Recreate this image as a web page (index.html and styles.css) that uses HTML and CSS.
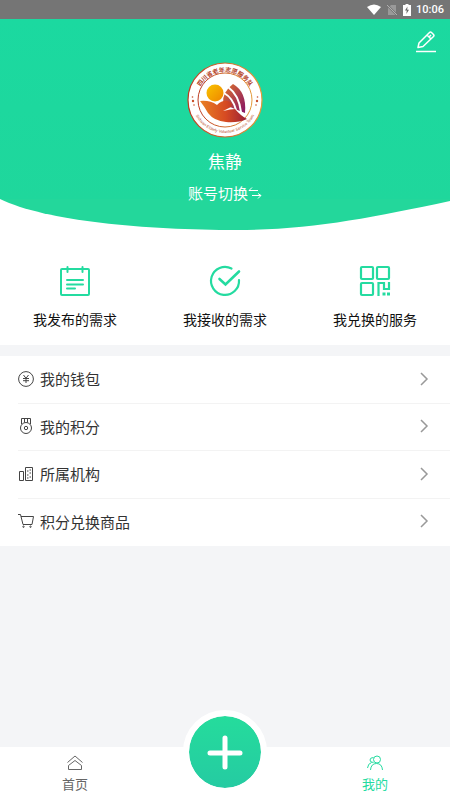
FILE: index.html
```
<!DOCTYPE html>
<html lang="zh-CN">
<head>
<meta charset="utf-8">
<meta name="viewport" content="width=device-width, initial-scale=1.0">
<title>我的</title>
<link rel="stylesheet" href="styles.css">
</head>
<body>
<div class="status">
  <svg width="14" height="12" viewBox="0 0 14 12"><path d="M0 3Q7-2 14 3L7 11Z" fill="#fff"/></svg>
  <svg width="12" height="12" viewBox="0 0 12 12"><path d="M5 1h5v10H2V4Z" fill="#999"/><path d="M1 1l10 10" stroke="#757575" stroke-width="2"/><path d="M1 1l10 10" stroke="#b0b0b0"/></svg>
  <svg width="8" height="12" viewBox="0 0 8 12"><path d="M2.500 0h3v1H8v11H0V1h2.500Z" fill="#fff"/><path d="M4.500 2.500L2 6.500h1.800L3.300 10 6 5.700H4.200Z" fill="#666"/></svg>
  <span class="clock">10:06</span>
</div>

<header>
  <div class="profile">
    <button class="edit" aria-label="编辑">
      <svg width="20" height="22" viewBox="0 0 20 22" fill="none" stroke="#fff" stroke-width="1.500"><path d="M0 20.500h20"/><path d="M2 16.500l1-4.500L13.500 1.500q1-1 2 0l2 2q1 1 0 2L7 15.500ZM11 4l4 4M13.500 5.500l1.500-1.500" stroke-linejoin="round"/></svg>
    </button>
    <svg class="avatar" width="76" height="76" viewBox="0 0 76 76">
      <defs>
        <linearGradient id="sun" x1="0" y1="0" x2="1" y2="1"><stop offset="0" stop-color="#f9c400"/><stop offset="1" stop-color="#ef8500"/></linearGradient>
        <linearGradient id="hand"><stop offset="0" stop-color="#e98123"/><stop offset=".55" stop-color="#d64a22"/><stop offset="1" stop-color="#982038"/></linearGradient>
        <linearGradient id="sail" x1="0" y1="0" x2="1" y2="1"><stop offset="0" stop-color="#e0762a"/><stop offset=".9" stop-color="#8d1b62"/></linearGradient>
        <linearGradient id="ring"><stop offset="0" stop-color="#bd3a20"/><stop offset="1" stop-color="#e39a3a"/></linearGradient>
        <path id="top" d="M10 38a28 28 0 0 1 56 0"/>
        <path id="bottom" d="M5 38a33 33 0 0 0 66 0"/>
      </defs>
      <circle cx="38" cy="38" r="37" fill="#fff" stroke="url(#ring)" stroke-width="1.200"/>
      <circle cx="38" cy="38" r="27" fill="none" stroke="url(#ring)"/>
      <text class="seal-cn"><textPath href="#top" startOffset="50%" text-anchor="middle">四川省老年志愿服务队</textPath></text>
      <text class="seal-en"><textPath href="#bottom" startOffset="50%" text-anchor="middle">Sichuan Elderly Volunteer Service Team</textPath></text>
      <g fill="#c8502b"><circle cx="5.500" cy="35" r=".8"/><circle cx="6" cy="39" r="1.200"/><circle cx="7" cy="43" r=".8"/><circle cx="70.500" cy="35" r=".8"/><circle cx="70" cy="39" r="1.200"/><circle cx="69" cy="43" r=".8"/></g>
      <path d="M46 22Q60 30 58 51Q50 48 36 42Q35 30 46 22Z" fill="url(#sail)"/>
      <path d="M37 31q9 5 12 17M41 25q11 8 13 25" fill="none" stroke="#fff" stroke-width="2"/>
      <circle cx="28" cy="31" r="8.500" fill="url(#sun)"/>
      <path d="M13 39q10-1 17 4 5-5 11-4 6 2 3 6-4 2-8 4 8-2 12-2 6 7 12 10-9 4-21 3-12-1-18-9-4-7-8-12Z" fill="url(#hand)"/>
    </svg>
    <h1>焦静</h1>
    <button class="switch">账号切换<svg width="14" height="12" viewBox="0 0 14 12" fill="none" stroke="#fff"><path d="M4 .5L1 3.500h9M4 8.500h9M10 11.500l3-3-3-2"/></svg></button>
  </div>
  <svg class="curve" viewBox="0 0 450 32" preserveAspectRatio="none"><path d="M0 0C45 22 145 31 237 31 310 31 370 19 450 2V0Z"/></svg>
</header>

<main>
  <nav class="shortcuts">
    <a href="#published">
      <svg class="icon" viewBox="0 0 30 30" stroke-width="2"><rect x="1" y="3" width="28" height="26" rx="1"/><path d="M7.500 1v5M22.500 1v5M7 14h16M7 18.500h16M7 22.500h8" stroke-linecap="round"/></svg>
      <span>我发布的需求</span>
    </a>
    <a href="#received">
      <svg class="icon" viewBox="0 0 30 30" stroke-width="2.200" stroke-linecap="round"><path d="M21.500 2.500A14 14 0 1 0 29 14"/><path d="M9.500 13l6 5.500L29 5.500" stroke-width="2.600"/></svg>
      <span>我接收的需求</span>
    </a>
    <a href="#exchanged">
      <svg class="icon" viewBox="0 0 30 30" stroke-width="2.200"><rect x="1" y="1" width="12" height="12" rx="1"/><rect x="17" y="1" width="12" height="12" rx="1"/><rect x="1" y="17" width="12" height="12" rx="1"/><path d="M18.500 30V17H24v6h5v-7"/><path d="M22.500 28h3M27 28h3" stroke-width="3"/></svg>
      <span>我兑换的服务</span>
    </a>
  </nav>

  <nav class="menu">
    <a href="#wallet">
      <svg class="glyph" viewBox="0 0 16 16"><circle cx="8" cy="8" r="7.400"/><path d="M5.500 4L8 7.300 10.500 4M8 7.300V12M5 7.500h6M5 9.700h6"/></svg>
      <span>我的钱包</span>
      <svg class="arrow" viewBox="0 0 8 14"><path d="M1 1l6 6-6 6"/></svg>
    </a>
    <a href="#points">
      <svg class="glyph" viewBox="0 0 16 16"><circle cx="8" cy="10" r="5.500"/><circle cx="8" cy="10" r="1.700"/><path d="M3.500 6V.5h9V6M6.500 1v3.500M9.500 1v3.500"/></svg>
      <span>我的积分</span>
      <svg class="arrow" viewBox="0 0 8 14"><path d="M1 1l6 6-6 6"/></svg>
    </a>
    <a href="#organization">
      <svg class="glyph" viewBox="0 0 16 16"><path d="M1.500 5.500h4v9h-4ZM7.500 1.500h7v13h-7Z"/><path d="M9 5h1.500M11.500 7H13M9 9h1.500M11.500 11H13M11.500 4H13M9 12h1.500"/></svg>
      <span>所属机构</span>
      <svg class="arrow" viewBox="0 0 8 14"><path d="M1 1l6 6-6 6"/></svg>
    </a>
    <a href="#goods">
      <svg class="glyph" viewBox="0 0 16 16"><path d="M0 1.500h2.500L5 11.500h9L15.500 3.500H3"/><circle cx="5.500" cy="13.700" r=".7"/><circle cx="12.500" cy="13.700" r=".7"/></svg>
      <span>积分兑换商品</span>
      <svg class="arrow" viewBox="0 0 8 14"><path d="M1 1l6 6-6 6"/></svg>
    </a>
  </nav>
</main>

<footer>
  <a class="tab" href="#home">
    <svg width="16" height="16" viewBox="0 0 16 16"><path d="M.5 7.500L8 1l7.500 6.500M1.500 14.500V10.500L8 5.500l6.500 5v4Z"/></svg>
    <span>首页</span>
  </a>
  <button class="add" aria-label="发布">
    <svg width="36" height="36" viewBox="0 0 36 36"><path d="M18 4v29M3 19h30" stroke="#fff" stroke-width="5" stroke-linecap="round"/></svg>
  </button>
  <a class="tab active" href="#me">
    <svg width="16" height="16" viewBox="0 0 16 16"><circle cx="10" cy="4.500" r="3.500"/><path d="M3.500 15Q4 8.500 9.500 8.500T15.500 15M6.500 2.500Q3 2.500 3 5t3.500 2.500M.5 13Q1 8.500 4.500 7.500"/></svg>
    <span>我的</span>
  </a>
</footer>
</body>
</html>
```
FILE: styles.css
```
* { box-sizing: border-box; }
body {
  margin: 0;
  min-height: 100vh;
  display: flex;
  flex-direction: column;
  background: #f4f5f7;
  color: #333;
  font-family: "Noto Sans CJK SC", sans-serif;
}
a { color: inherit; text-decoration: none; }
button { padding: 0; border: none; background: none; color: inherit; font: inherit; cursor: pointer; }
svg { display: block; flex: none; }

.status {
  display: flex;
  align-items: center;
  justify-content: flex-end;
  gap: 5px;
  height: 19px;
  padding-right: 6px;
  background: #757575;
  color: #fff;
}
.clock { font: 500 11px/19px Roboto, sans-serif; }

header { background: #fff; color: #fff; }
.profile {
  position: relative;
  display: flex;
  flex-direction: column;
  align-items: center;
  height: 180px;
  padding-top: 43px;
  background: linear-gradient(#1bd9a0, #1fd79c);
}
.edit { position: absolute; top: 12px; right: 14px; }
h1 { margin: 11px 0 0; font-size: 17px; line-height: 24px; font-weight: 400; }
.switch { display: flex; align-items: center; margin-top: 9px; font-size: 15px; line-height: 22px; }
.curve { width: 100%; height: 32px; fill: #23d79b; }
.seal-cn { font-size: 6px; font-weight: 700; fill: #b33d24; }
.seal-en { font: 4px "Liberation Sans", sans-serif; fill: #b84a24; }

.shortcuts { display: flex; padding: 35px 0 15px; background: #fff; color: #111; }
.shortcuts a {
  flex: 1;
  display: flex;
  flex-direction: column;
  align-items: center;
  gap: 12px;
  font-size: 14px;
  line-height: 22px;
}
.icon { width: 30px; height: 30px; fill: none; stroke: #24dba0; overflow: visible; }

.menu { display: grid; grid-auto-rows: 1fr; min-height: 190px; margin-top: 11px; background: #fff; }
.menu a {
  display: flex;
  align-items: center;
  gap: 6px;
  margin-left: 18px;
  padding: 0 22px 1px 0;
  border-bottom: 1px solid #f3f3f3;
  font-size: 15px;
}
.menu a:last-child { border-bottom-color: #fff; }
.menu span { flex: 1; }
.glyph { width: 16px; height: 16px; fill: none; stroke: #444; }
.arrow { width: 8px; height: 14px; fill: none; stroke: #999; stroke-width: 1.5; overflow: visible; }

footer {
  position: relative;
  display: flex;
  justify-content: space-between;
  height: 53px;
  margin-top: auto;
  background: #fff;
}
.tab {
  width: 33.33%;
  display: flex;
  flex-direction: column;
  align-items: center;
  gap: 3px;
  padding-top: 8px;
  color: #666;
  font-size: 13px;
  line-height: 20px;
}
.tab svg { fill: none; stroke: currentColor; }
.tab.active { color: #24dba0; }
/* sits over the top edge of the tab bar */
.add {
  position: absolute;
  left: 50%;
  bottom: 6px;
  width: 84px;
  height: 84px;
  margin-left: -42px;
  display: flex;
  align-items: center;
  justify-content: center;
  border: 6px solid #fff;
  border-radius: 50%;
  background: linear-gradient(#25dc9c, #25cba2) padding-box;
}
```
